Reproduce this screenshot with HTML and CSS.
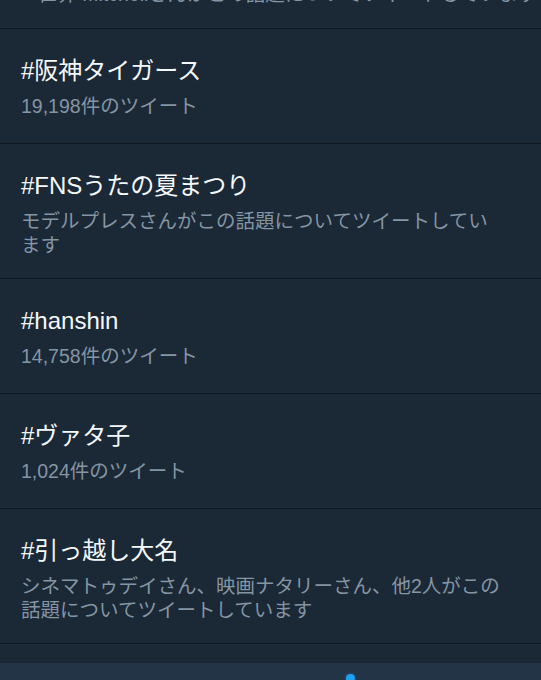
FILE: index.html
```html
<!DOCTYPE html>
<html>
<head>
  <meta charset="utf-8">
  <title>トレンド</title>
  <link rel="stylesheet" href="styles.css">
</head>
<body>
  <div class="screen">
    <div class="trend-list">
      <div class="trend trend-cut">
        <div class="trend-meta">≡ 世界 Mitchellさんがこの話題についてツイートしています</div>
      </div>

      <div class="trend">
        <div class="trend-name">#阪神タイガース</div>
        <div class="trend-meta">19,198件のツイート</div>
      </div>

      <div class="trend">
        <div class="trend-name">#FNSうたの夏まつり</div>
        <div class="trend-meta">モデルプレスさんがこの話題についてツイートしています</div>
      </div>

      <div class="trend">
        <div class="trend-name">#hanshin</div>
        <div class="trend-meta">14,758件のツイート</div>
      </div>

      <div class="trend">
        <div class="trend-name">#ヴァタ子</div>
        <div class="trend-meta">1,024件のツイート</div>
      </div>

      <div class="trend">
        <div class="trend-name">#引っ越し大名</div>
        <div class="trend-meta">シネマトゥデイさん、映画ナタリーさん、他2人がこの話題についてツイートしています</div>
      </div>
    </div>

    <div class="tab-bar">
      <div class="tab">
        <svg class="tab-icon" viewBox="0 0 24 24"><path d="M3 11l9-8 9 8v10h-6v-6H9v6H3z"/></svg>
      </div>
      <div class="tab">
        <svg class="tab-icon" viewBox="0 0 24 24"><circle cx="10.5" cy="10.5" r="7"/><path d="M16 16l5 5"/></svg>
      </div>
      <div class="tab">
        <span class="tab-icon-wrap">
          <svg class="tab-icon" viewBox="0 0 24 24"><path d="M6 17V11a6 6 0 0 1 12 0v6l2 2H4z"/></svg>
          <span class="badge"></span>
        </span>
      </div>
      <div class="tab">
        <svg class="tab-icon" viewBox="0 0 24 24"><rect x="3" y="5" width="18" height="14" rx="2"/><path d="M3 7l9 6 9-6"/></svg>
      </div>
    </div>
  </div>
</body>
</html>
```

FILE: styles.css
```css
body {
  margin: 0;
  padding: 0;
  background-color: #1b2836;
  font-family: 'Liberation Sans', 'Noto Sans CJK JP', sans-serif;
  overflow: hidden;
}

.screen {
  width: 541px;
}

.trend-list {
  padding-bottom: 18px;
}

.trend {
  min-height: 115px;
  box-sizing: border-box;
  padding: 26px 36px 21px 21px;
  border-bottom: 1px solid #101821;
}

.trend-cut {
  min-height: 0;
  height: 29px;
  padding-top: 0;
  padding-bottom: 0;
  overflow: hidden;
}

.trend-cut .trend-meta {
  margin-top: -18px;
  white-space: nowrap;
}

.trend-name {
  font-size: 24px;
  line-height: 32px;
  color: #f5f8fa;
}

.trend-meta {
  margin-top: 7px;
  font-size: 19.5px;
  line-height: 24px;
  color: #8495a4;
}

/* Tab bar */
.tab-bar {
  display: grid;
  grid-template-columns: repeat(4, 1fr);
  height: 90px;
  background-color: #243447;
  border-top: 1px solid #1a2633;
}

.tab {
  display: flex;
  justify-content: center;
  padding-top: 18px;
}

.tab-icon-wrap {
  position: relative;
  display: inline-block;
}

.tab-icon {
  width: 28px;
  height: 28px;
  fill: none;
  stroke: #8899a6;
  stroke-width: 2;
}

.badge {
  position: absolute;
  top: -7px;
  right: -3px;
  width: 9px;
  height: 9px;
  border-radius: 50%;
  background-color: #1da1f2;
  box-shadow: 0 0 3px rgba(29, 161, 242, 0.6);
}
```
